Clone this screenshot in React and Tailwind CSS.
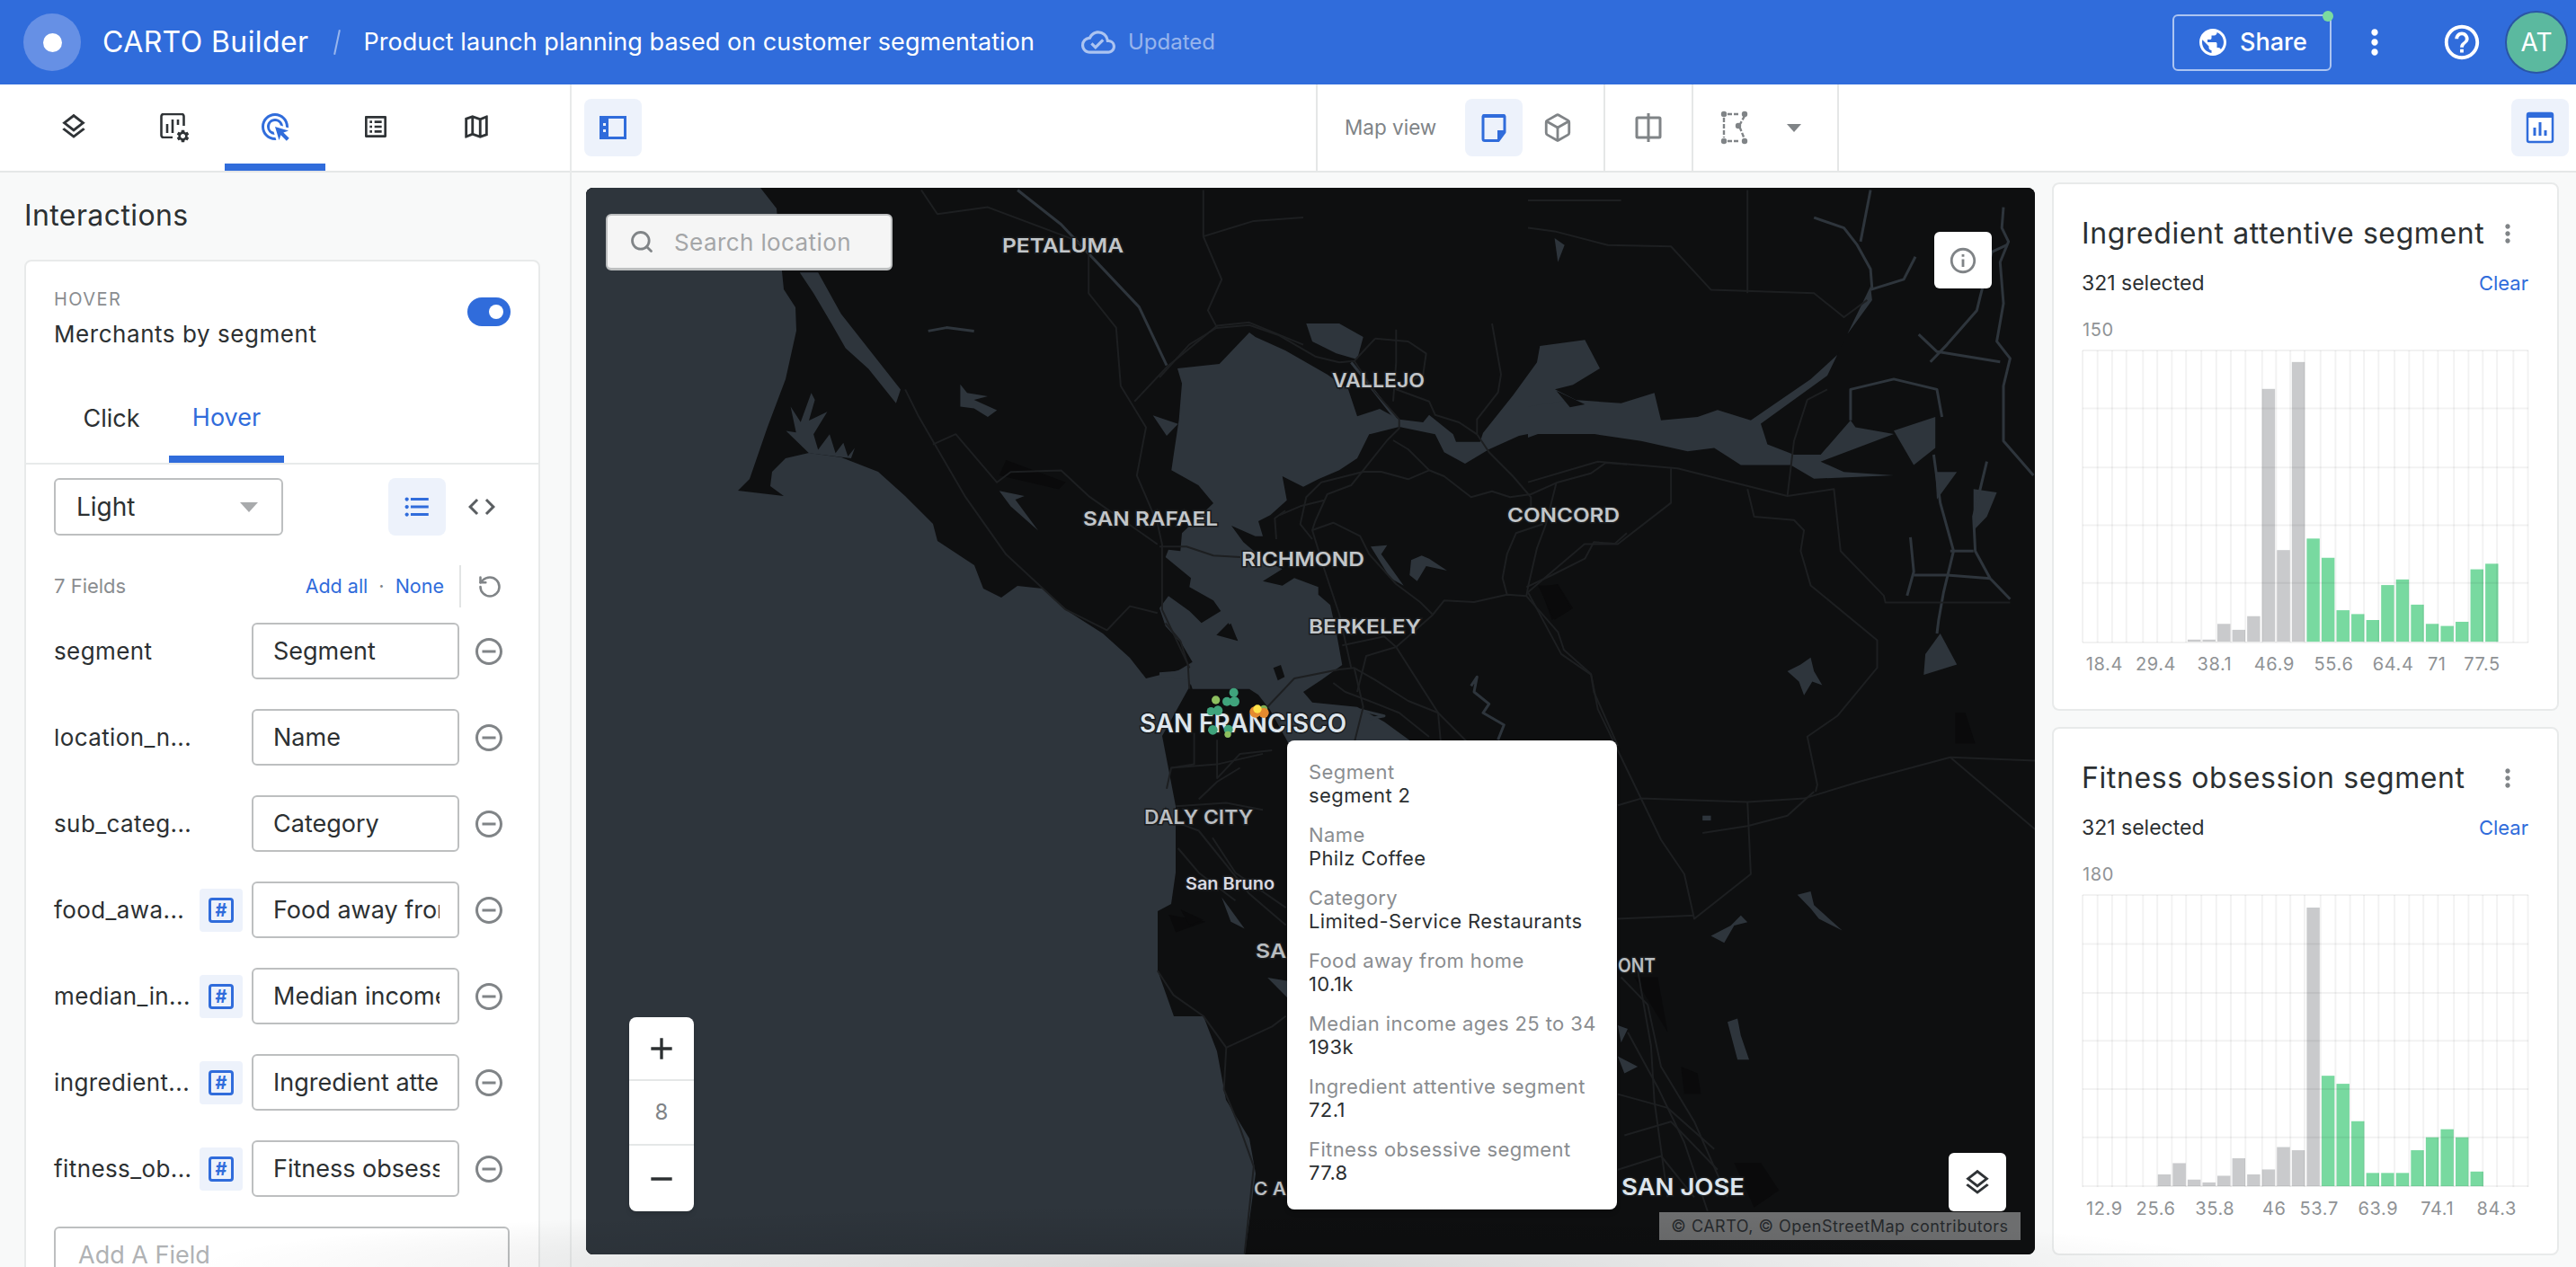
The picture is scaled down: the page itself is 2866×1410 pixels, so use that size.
import React from "react";
import { RotateCcw, Search, Box } from "lucide-react";
import {
  MdOutlineLayers,
  MdAdsClick,
  MdOutlineListAlt,
  MdOutlineMap,
  MdPublic,
  MdMoreVert,
  MdHelpOutline,
  MdOutlineCloudDone,
  MdFormatListBulleted,
  MdCode,
  MdRemoveCircleOutline,
  MdInfoOutline,
  MdAdd,
  MdRemove,
  MdSettings,
} from "react-icons/md";

// map traces: points read off the reference, [x, y, x, y...] in zoom space
const conv = (ox, oy, sx, sy, a, close) => {
  let d = "";
  for (let i = 0; i < a.length; i += 2) {
    d += (i ? "L" : "M") + (ox + a[i] / sx).toFixed(1) + " " + (oy + a[i + 1] / sy).toFixed(1);
  }
  return d + (close ? "Z" : "");
};
const z8 = (a, c) => conv(650, 200, 1.96, 2.613, a, c);
const z9 = (a, c) => conv(650, 800, 1.96, 2.57, a, c);
const z10 = (a, c) => conv(1700, 200, 2.703, 1.307, a, c);
const z11 = (a, c) => conv(1290, 360, 3, 3, a, c);
const pg = (a, c) => conv(0, 0, 1, 1, a, c);

const WATER = "#2e353c";
const ROAD = "#1d1f21";

const waterShapes = [
  pg([652, 209, 846, 209, 864, 232, 869, 292, 872, 322, 885, 342, 886, 368, 874, 422, 854, 475, 834, 533, 821, 546, 872, 552, 857, 541, 859, 525, 874, 510, 900, 504, 936, 509, 977, 525, 1007, 552, 1038, 583, 1043, 602, 1084, 629, 1094, 655, 1114, 665, 1132, 652, 1160, 655, 1191, 682, 1227, 705, 1257, 732, 1275, 755, 1323, 743, 1330, 750, 1323, 765, 1293, 819, 1308, 897, 1308, 971, 1303, 1006, 1288, 1014, 1288, 1080, 1306, 1131, 1339, 1131, 1354, 1170, 1364, 1224, 1390, 1267, 1397, 1306, 1385, 1396, 652, 1396], true),
  z11([0, 1165, 60, 1160, 110, 1130, 75, 1070, 20, 1010, 0, 950, 30, 910, 100, 960, 140, 1000, 205, 960, 180, 925, 100, 880, 105, 850, 20, 780, 30, 755, 70, 760, 75, 700, 180, 600, 130, 540, 40, 490, 50, 420, 65, 320, 75, 200, 60, 150, 200, 135, 300, 30, 320, 45, 420, 90, 560, 170, 630, 220, 660, 310, 735, 285, 800, 320, 880, 330, 900, 305, 980, 370, 990, 395, 1070, 395, 1080, 365, 1180, 240, 1260, 130, 1270, 75, 1420, 55, 1470, 150, 1380, 205, 1320, 220, 1400, 260, 1560, 290, 1560, 375, 1350, 345, 1200, 375, 1100, 420, 1020, 468, 950, 430, 920, 370, 800, 345, 700, 370, 660, 450, 600, 490, 530, 520, 480, 545, 410, 510, 425, 590, 370, 640, 330, 660, 345, 710, 320, 710, 240, 675, 280, 730, 350, 790, 410, 820, 345, 860, 410, 875, 450, 850, 530, 880, 530, 905, 570, 940, 590, 1030, 610, 1140, 540, 1190, 480, 1230, 510, 1265, 660, 1280, 750, 1330, 860, 1410, 860, 1500, 500, 1500, 430, 1400, 369, 1290, 330, 1240, 300, 1220, 110, 1220, 100, 1190, 0, 1180], true),
  z10([0, 330, 130, 320, 280, 325, 380, 310, 400, 350, 510, 345, 570, 335, 670, 350, 850, 290, 930, 255, 1020, 165, 1030, 155, 1035, 175, 960, 225, 900, 285, 700, 355, 720, 385, 800, 400, 880, 400, 970, 350, 985, 360, 1100, 370, 880, 410, 950, 425, 1100, 430, 860, 435, 790, 415, 640, 415, 560, 390, 480, 395, 340, 380, 200, 370, 30, 370, 0, 375], true),
  z10([1100, 365, 1225, 345, 1225, 390, 1160, 415], true),
  z10([1340, 450, 1410, 455, 1380, 490, 1340, 510], true),
  z10([1225, 425, 1290, 425, 1230, 465], true),
  z10([1195, 690, 1240, 660, 1290, 705, 1190, 720], true),
  z10([780, 715, 820, 705, 850, 695, 860, 715, 885, 735, 855, 730, 830, 750, 815, 730], true),
  z10([810, 1040, 850, 1035, 860, 1055, 945, 1092, 875, 1075, 850, 1060], true),
  z10([550, 1100, 610, 1085, 640, 1070, 660, 1080, 620, 1085, 590, 1110], true),
  z10([600, 1225, 630, 1220, 640, 1245, 665, 1280, 630, 1280], true),
  z10([270, 1230, 300, 1235, 280, 1255], true),
  z10([270, 1275, 330, 1290, 290, 1300], true),
  z10([525, 925, 550, 925, 550, 932, 525, 932], true),
  z10([80, 85, 110, 95, 90, 120], true),
  z8([470, 270, 510, 270, 560, 390, 690, 610, 680, 650, 620, 550, 570, 490, 540, 420, 500, 330], true),
  z8([495, 620, 503, 640, 490, 700, 530, 675, 500, 740, 510, 785, 535, 740, 548, 795, 565, 765, 575, 805, 590, 780, 582, 810, 490, 795, 440, 730, 462, 735, 450, 660, 472, 705], true),
  z8([820, 595, 835, 620, 880, 630, 850, 640, 900, 670, 880, 690, 850, 665, 820, 660], true),
  z8([905, 905, 960, 920, 940, 930, 990, 1020, 930, 950], true),
  z8([1240, 685, 1295, 710, 1270, 745], true),
  z11([490, 0, 600, 0, 680, 45, 660, 120, 590, 100, 510, 60], true),
  z11([705, 745, 760, 740, 740, 770, 815, 875, 770, 850], true),
  z11([840, 790, 875, 775, 900, 785, 960, 825, 890, 810, 860, 860, 835, 840], true),
  z9([1390, 510, 1440, 600, 1410, 580], true),
  z9([1490, 740, 1535, 750, 1535, 800], true),
];

const landIslands = [
  z11([230, 1000, 262, 1060, 190, 1040], true),
  z11([380, 1150, 405, 1140, 418, 1180, 395, 1192], true),
  z11([1325, 225, 1420, 270, 1370, 280], true),
  z8([1385, 1320, 1410, 1290, 1425, 1340], true),
];

const rivers = [
  z8([945, 30, 1040, 130, 1210, 370, 1270, 540]),
  z8([750, 440, 790, 430, 850, 440]),
  z11([640, 130, 720, 230, 790, 320]),
  z10([970, 350, 970, 305, 1100, 290, 1230, 305, 1245, 345]),
  z10([860, 55, 950, 70, 990, 95, 1030, 130, 1035, 160]),
  z10([1000, 90, 1030, 15]),
  z10([1030, 160, 1130, 145, 1165, 112]),
  z10([1175, 225, 1230, 250, 1420, 265]),
  z10([1430, 40, 1425, 70, 1445, 90, 1420, 120, 1430, 180, 1410, 235, 1450, 260, 1430, 300, 1430, 380, 1520, 430]),
  z10([1210, 265, 1260, 240, 1350, 190, 1360, 170, 1395, 105, 1440, 95]),
  z10([1220, 400, 1240, 470, 1280, 540, 1250, 600, 1235, 640, 1230, 660]),
  z10([1380, 410, 1340, 490, 1345, 540, 1390, 580, 1450, 610]),
  z10([1150, 520, 1160, 570, 1140, 605]),
  z10([1160, 575, 1260, 575, 1390, 580]),
  z10([1270, 540, 1340, 540]),
  z11([1040, 1210, 1060, 1180, 1050, 1230, 1100, 1270, 1080, 1300, 1150, 1340, 1130, 1390]),
  z11([670, 1290, 750, 1310, 700, 1320]),
];

const roads = [
  z11([0, 180, 100, 70, 190, 15, 300, 5, 400, 40, 520, 110, 600, 130, 650, 125, 720, 50]),
  z11([650, 125, 720, 230, 800, 320, 800, 350, 760, 390, 680, 490, 640, 540, 560, 570, 520, 660, 510, 690, 550, 820, 600, 970, 640, 1150]),
  z11([780, 390, 830, 420, 900, 490, 830, 520, 740, 495, 680, 495, 540, 530, 490, 580, 470, 670, 510, 720]),
  z11([900, 490, 950, 510, 1040, 580, 1110, 560, 1170, 580, 1240, 570, 1330, 530, 1440, 500, 1490, 465, 1560, 470]),
  z11([1060, 370, 1100, 430, 1180, 510, 1240, 580, 1240, 620]),
  z11([1060, 370, 1060, 320, 1130, 230, 1140, 170, 1110, 0]),
  z11([1325, 530, 1290, 670, 1260, 750, 1230, 880, 1225, 910, 1330, 1030, 1350, 1090, 1440, 1170, 1450, 1230, 1530, 1410]),
  z11([1225, 910, 1160, 905, 1050, 930, 950, 925, 910, 975, 790, 1080, 690, 1110, 660, 1230]),
  z11([510, 690, 580, 665, 670, 710, 700, 770, 790, 870, 870, 930, 910, 970]),
  z11([790, 1080, 930, 1300, 940, 1410]),
  z11([0, 745, 90, 745, 180, 775, 270, 780]),
  z11([100, 1220, 95, 1140, 70, 1060, 20, 1000]),
  z11([360, 1280, 450, 1185, 600, 1155, 650, 1150, 720, 1190, 830, 1260, 930, 1300, 1030, 1400]),
  z11([1160, 905, 1145, 850, 1160, 770, 1190, 700, 1280, 670]),
  z11([1225, 880, 1310, 840, 1420, 785, 1450, 730, 1520, 735, 1560, 700]),
  z11([790, 20, 790, 130, 780, 260]),
  z11([720, 50, 830, 60, 890, 100, 880, 170, 790, 220, 900, 260, 920, 305, 1000, 330, 1060, 370]),
  z11([610, 1075, 750, 1045, 790, 1080]),
  z11([400, 640, 470, 610, 550, 590]),
  z11([390, 720, 385, 650, 420, 625]),
  z11([580, 1200, 620, 1230, 700, 1260, 800, 1300, 900, 1380]),
  z11([650, 1150, 680, 1280, 650, 1400]),
  z10([0, 30, 280, 30]),
  z10([0, 70, 80, 75, 240, 95, 430, 97, 550, 160, 860, 165, 950, 200, 1020, 175]),
  z10([660, 15, 660, 165]),
  z10([0, 440, 210, 410, 450, 420, 780, 460, 920, 450, 940, 540, 1070, 605, 1075, 615, 1450, 615]),
  z10([660, 450, 680, 490, 800, 495, 830, 510, 820, 540, 850, 590, 1050, 670, 1050, 710, 930, 780, 840, 810, 870, 880, 865, 890]),
  z10([780, 460, 800, 380, 840, 320, 900, 305]),
  z10([0, 600, 100, 690, 190, 720, 210, 770, 300, 860, 400, 960, 470, 1010, 500, 1075, 670, 1010, 660, 905]),
  z10([430, 420, 430, 470, 270, 530, 170, 530, 0, 600]),
  z10([270, 910, 340, 900, 660, 905, 830, 900, 1000, 875, 1270, 840, 1525, 945]),
  z10([1270, 840, 1525, 845]),
  z10([525, 950, 660, 940, 780, 925, 860, 890]),
  z10([270, 1075, 500, 1070]),
  z10([280, 1160, 360, 1200, 400, 1290, 500, 1370, 600, 1480]),
  z10([330, 1150, 370, 1260, 380, 1340, 420, 1480]),
  z10([270, 1330, 420, 1350, 560, 1410]),
  z10([290, 1390, 430, 1370, 570, 1440]),
  z10([270, 1440, 400, 1420, 500, 1480]),
  z10([300, 1240, 390, 1320, 470, 1400, 540, 1500]),
  z8([735, 30, 770, 100, 880, 80, 1060, 170, 1100, 200, 1100, 330, 1160, 430, 1170, 600, 1225, 720, 1205, 860, 1250, 1000, 1260, 1060, 1260, 1250, 1320, 1420]),
  z8([1350, 30, 1350, 165, 1390, 290, 1360, 380, 1380, 430]),
  z8([1350, 165, 1460, 120, 1568, 110]),
  z8([700, 610, 730, 690, 830, 920, 920, 1090, 1050, 1250, 1140, 1310, 1190, 1240, 1250, 1260]),
  z8([760, 770, 810, 740, 900, 880, 930, 850, 1040, 845, 1100, 920, 1250, 1060]),
  z8([1200, 645, 1270, 545, 1380, 425, 1450, 415, 1568, 480]),
  z9([1330, 40, 1330, 130, 1280, 140, 1270, 200]),
  z9([1280, 140, 1380, 130, 1480, 100]),
  z9([1300, 300, 1340, 320, 1420, 450, 1450, 500, 1530, 590]),
  z9([1370, 340, 1420, 440, 1530, 540]),
  z9([1290, 250, 1400, 240, 1480, 260]),
  z9([1250, 720, 1285, 790, 1350, 850, 1400, 940, 1500, 880, 1530, 850]),
  z9([1400, 940, 1395, 1060, 1430, 1170, 1460, 1280, 1440, 1530]),
  z9([1295, 370, 1340, 440, 1420, 520]),
  z9([1380, 60, 1380, 170, 1430, 100, 1500, 90]),
  z9([1430, 140, 1380, 180, 1340, 230]),
];

const parks = [
  z9([1275, 560, 1355, 580, 1290, 610], true),
  z9([1300, 545, 1350, 575, 1320, 590], true),
  z11([1270, 880, 1330, 870, 1380, 950, 1310, 990], true),
  z10([30, 590, 90, 590, 130, 625, 80, 640], true),
  z10([1285, 775, 1315, 775, 1345, 820, 1285, 820], true),
  z10([320, 1160, 390, 1160, 420, 1240], true),
  z10([460, 1290, 510, 1300, 520, 1330, 470, 1330], true),
  z10([620, 1430, 700, 1430, 755, 1470, 680, 1495], true),
  z8([905, 860, 920, 815, 1050, 880, 1035, 900], true),
];

// labels cut by the tooltip keep only their visible letters
const mapLabels = [
  { t: "PETALUMA", x: 1115, w: 135, y: 273, fs: 22, c: "#c2c6c9" },
  { t: "VALLEJO", x: 1482, w: 103, y: 423, fs: 22, c: "#c2c6c9" },
  { t: "SAN RAFAEL", x: 1205, w: 150, y: 577, fs: 22, c: "#c2c6c9" },
  { t: "RICHMOND", x: 1381, w: 137, y: 622, fs: 22, c: "#c2c6c9" },
  { t: "CONCORD", x: 1677, w: 125, y: 573, fs: 22, c: "#c2c6c9" },
  { t: "BERKELEY", x: 1456, w: 125, y: 697, fs: 22, c: "#c2c6c9" },
  { t: "SAN FRANCISCO", x: 1268, w: 230, y: 805, fs: 28, c: "#dde5ec" },
  { t: "DALY CITY", x: 1273, w: 121, y: 909, fs: 22, c: "#b9bdc0" },
  { t: "San Bruno", x: 1319, w: 99, y: 983, fs: 19, c: "#d8d9e2" },
  { t: "SA", x: 1397, w: 34, y: 1058, fs: 22, c: "#b9bdc0" },
  { t: "C A", x: 1395, w: 36, y: 1323, fs: 20, c: "#b9bdc0" },
  { t: "ONT", x: 1800, w: 42, y: 1074, fs: 22, c: "#b9bdc0" },
  { t: "SAN JOSE", x: 1804, w: 137, y: 1321, fs: 26, c: "#dde5ec" },
];

const markers = [
  [248, 1232, 12, "#3fa37c"],
  [250, 1262, 14, "#3fa37c"],
  [225, 1262, 12, "#3fa37c"],
  [188, 1257, 11, "#8dbf5f"],
  [195, 1292, 13, "#3fa37c"],
  [172, 1295, 11, "#3fa37c"],
  [178, 1357, 13, "#3fa37c"],
  [230, 1355, 12, "#3fa37c"],
  [228, 1372, 8, "#8dbf5f"],
  [348, 1287, 10, "#7fae55"],
  [320, 1297, 16, "#e48a2f"],
  [348, 1300, 14, "#e48a2f"],
  [327, 1287, 11, "#ffe34a"],
];

const MapCanvas = () => (
  <svg viewBox="652 209 1612 1187" className="absolute inset-0 h-full w-full">
    <rect x="652" y="209" width="1612" height="1187" fill="#0e0f10" />
    {parks.map((d, i) => (
      <path key={i} d={d} fill="#0a0a0b" />
    ))}
    {waterShapes.map((d, i) => (
      <path key={i} d={d} fill={WATER} />
    ))}
    {landIslands.map((d, i) => (
      <path key={i} d={d} fill="#0e0f10" />
    ))}
    {rivers.map((d, i) => (
      <path key={i} d={d} fill="none" stroke={WATER} strokeWidth="3" strokeLinejoin="round" />
    ))}
    {roads.map((d, i) => (
      <path key={i} d={d} fill="none" stroke={ROAD} strokeWidth="2" strokeLinejoin="round" />
    ))}
    {mapLabels.map((l) => (
      <text
        key={l.t}
        x={l.x}
        y={l.y + l.fs * 0.36}
        textLength={l.w}
        lengthAdjust="spacingAndGlyphs"
        fontSize={l.fs}
        fontWeight="600"
        fontFamily="Inter, sans-serif"
        fill={l.c}
        stroke="#1a1c1e"
        strokeWidth="3"
        paintOrder="stroke"
      >
        {l.t}
      </text>
    ))}
    {markers.map(([x, y, r, c], i) => (
      <circle key={i} cx={1290 + x / 3} cy={360 + y / 3} r={r / 3 + 1} fill={c} />
    ))}
  </svg>
);

// histogram bars as the top edge in zoom px, null = empty bin
const widget1 = {
  title: "Ingredient attentive segment",
  max: "150",
  base: 1348,
  firstGreen: 15,
  tops: [null, null, null, null, null, null, null, 1342, 1342, 1297, 1314, 1275, 625, 1086, 548, 1053, 1108, 1258, 1269, 1286, 1186, 1170, 1242, 1297, 1303, 1291, 1141, 1125],
  rows: [515, 681, 850, 1015, 1180, 1350],
  labels: [["18.4", 213], ["29.4", 361], ["38.1", 530], ["46.9", 702], ["55.6", 873], ["64.4", 1044], ["71", 1170], ["77.5", 1300]],
};
const widget2 = {
  title: "Fitness obsession segment",
  max: "180",
  base: 1338,
  firstGreen: 16,
  tops: [null, null, null, null, null, 1304, 1272, 1319, 1327, 1308, 1258, 1304, 1290, 1226, 1235, 541, 1022, 1045, 1152, 1300, 1300, 1300, 1235, 1198, 1175, 1198, 1296],
  rows: [505, 645, 785, 922, 1060, 1198, 1338],
  labels: [["12.9", 213], ["25.6", 361], ["35.8", 531], ["46", 702], ["53.7", 831], ["63.9", 1001], ["74.1", 1171], ["84.3", 1342]],
};
const gridCols = [150, 193, 235, 276, 324, 365, 407, 448, 492, 535, 577, 619, 667, 707, 748, 789, 835, 878, 920, 960, 1002, 1048, 1090, 1131, 1173, 1219, 1261, 1302, 1343, 1390, 1432];

const Histogram = ({ data }) => {
  const rowTop = data.rows[0];
  return (
    <svg width="496" height="368" className="block overflow-visible">
      {data.tops.map((top, i) =>
        top === null ? null : (
          <rect
            key={i}
            x={i * 16.56 + 1}
            y={(top - rowTop) / 2.57}
            width="14.4"
            height={(data.base - top) / 2.57}
            fill={i >= data.firstGreen ? "#78d9a0" : "#c9cacc"}
          />
        )
      )}
      {gridCols.map((c) => (
        <line key={c} x1={(c - 150) / 2.587} x2={(c - 150) / 2.587} y1="0" y2="325" stroke="rgba(0,0,0,0.05)" strokeWidth="2" />
      ))}
      {data.rows.map((r) => (
        <line key={r} x1="0" x2="496" y1={(r - rowTop) / 2.57} y2={(r - rowTop) / 2.57} stroke="rgba(0,0,0,0.05)" strokeWidth="2" />
      ))}
      {data.labels.map(([t, x]) => (
        <text key={t} x={(x - 150) / 2.587} y="356" textAnchor="middle" fontSize="20" letterSpacing="0.6" fontFamily="Inter, sans-serif" fill="#8f9295">
          {t}
        </text>
      ))}
    </svg>
  );
};

const Widget = ({ data }) => (
  <div className="h-[588px] w-[564px] rounded-lg border-2 border-[#e8eaea] bg-white pl-[31px] pr-[32px] pt-[33px]">
    <div className="flex h-[44px] items-center justify-between">
      <span className="whitespace-nowrap text-[32px] tracking-[0.6px] text-[#2c3032]">{data.title}</span>
      <MdMoreVert className="mr-[7px] shrink-0 text-[#808487]" size={32} />
    </div>
    <div className="mt-[17px] flex h-[32px] items-center justify-between">
      <span className="text-[23px] text-[#2c3032]">321 selected</span>
      <span className="text-[22px] text-[#306cdb]">Clear</span>
    </div>
    <div className="ml-[1px] mt-[24px] h-[24px] text-[20px] leading-[24px] tracking-[0.6px] text-[#909396]">{data.max}</div>
    <div className="ml-[1px] mt-[11px]">
      <Histogram data={data} />
    </div>
  </div>
);

const PanelIcon = () => (
  <svg width="32" height="32" viewBox="0 0 32 32" fill="none">
    <rect x="2.5" y="4.5" width="27" height="23" stroke="#306cdb" strokeWidth="3" />
    <rect x="2" y="4" width="9" height="24" fill="#306cdb" />
    <rect x="5" y="11" width="3" height="3" fill="#edf2fb" />
    <rect x="5" y="18" width="3" height="3" fill="#edf2fb" />
  </svg>
);

const WidgetGearIcon = () => (
  <span className="relative block h-[30px] w-[32px]">
    <svg width="28" height="28" viewBox="0 0 28 28" fill="none" stroke="#2f3336" strokeWidth="2.6">
      <path d="M14 27H4a2.5 2.5 0 0 1-2.5-2.5v-21A2.5 2.5 0 0 1 4 1h20a2.5 2.5 0 0 1 2.5 2.5V14" />
      <path d="M8 22V12M14 22V7M20 13V7" />
    </svg>
    <MdSettings className="absolute bottom-[-4px] right-[-2px] text-[#2f3336]" size={17} />
  </span>
);

const NoteIcon = () => (
  <svg width="30" height="34" viewBox="0 0 30 34" fill="none">
    <path d="M3 4.5h24V22l-7 9.5H5a2 2 0 0 1-2-2z" stroke="#306cdb" strokeWidth="3" strokeLinejoin="round" />
    <rect x="2" y="2" width="26" height="4" rx="1.5" fill="#306cdb" />
    <path d="M28 20h-9v12z" fill="#306cdb" />
  </svg>
);

const SplitIcon = () => (
  <svg width="32" height="32" viewBox="0 0 32 32" fill="none" stroke="#808487" strokeWidth="3">
    <rect x="3" y="5" width="26" height="22" rx="1" />
    <path d="M16 0v32" />
  </svg>
);

const DrawIcon = () => (
  <svg width="32" height="40" viewBox="0 0 32 40" fill="none" stroke="#808487" strokeWidth="2.4">
    <path d="M8 5h14M4 9v22M27 7l-6 11 6 15M8 35h14" strokeDasharray="5 2" />
    <g fill="#808487" stroke="none">
      <circle cx="4" cy="5" r="3.2" />
      <circle cx="27" cy="5" r="3.2" />
      <circle cx="20" cy="18" r="3.2" />
      <circle cx="4" cy="35" r="3.2" />
      <circle cx="27" cy="35" r="3.2" />
    </g>
  </svg>
);

const ChartIcon = () => (
  <svg width="32" height="36" viewBox="0 0 32 36" fill="none">
    <rect x="2" y="2" width="28" height="32" rx="2" fill="#fff" stroke="#306cdb" strokeWidth="2.5" />
    <rect x="2" y="2" width="28" height="5" fill="#306cdb" />
    <path d="M10 27V18M16 27V12M22 27v-6" stroke="#306cdb" strokeWidth="3" />
  </svg>
);

const fields = [
  { name: "segment", label: "Segment" },
  { name: "location_n...", label: "Name" },
  { name: "sub_categ...", label: "Category" },
  { name: "food_awa...", label: "Food away from home", num: true },
  { name: "median_in...", label: "Median income ages 25 to 34", num: true },
  { name: "ingredient...", label: "Ingredient attentive segment", num: true },
  { name: "fitness_ob...", label: "Fitness obsessive segment", num: true },
];

const FieldRow = ({ field }) => (
  <div className="flex h-[63px] items-center">
    <span className="w-[162px] whitespace-nowrap text-[26px] tracking-[0.4px] text-[#2c3032]">{field.name}</span>
    {field.num ? (
      <span className="flex h-[48px] w-[48px] items-center justify-center rounded bg-[#edf2fb]">
        <span className="flex h-[28px] w-[28px] items-center justify-center rounded-[4px] border-[3px] border-[#306cdb] text-[20px] font-bold leading-none text-[#306cdb]">
          #
        </span>
      </span>
    ) : (
      <span className="w-[48px]" />
    )}
    <div className="ml-[10px] flex h-[63px] w-[231px] items-center rounded-md border-2 border-[#bdbfc0] pl-[22px] pr-[20px]">
      <span className="block overflow-hidden whitespace-nowrap pt-[1px] text-[27px] text-[#2c3032]">{field.label}</span>
    </div>
    <MdRemoveCircleOutline className="ml-[15px] text-[#808487]" size={36} />
  </div>
);

const tooltipRows = [
  ["Segment", "segment 2"],
  ["Name", "Philz Coffee"],
  ["Category", "Limited-Service Restaurants"],
  ["Food away from home", "10.1k"],
  ["Median income ages 25 to 34", "193k"],
  ["Ingredient attentive segment", "72.1"],
  ["Fitness obsessive segment", "77.8"],
];

export default function App() {
  return (
    <div className="relative h-[1410px] w-full overflow-hidden bg-[#f8f9f9] font-['Inter',sans-serif]">
      {/* top bar */}
      <header className="flex h-[94px] items-center bg-[#306cdb] text-white">
        <div className="ml-[26px] flex h-[64px] w-[64px] items-center justify-center rounded-full bg-[#6690e5]">
          <div className="h-[21px] w-[21px] rounded-full bg-white" />
        </div>
        <span className="ml-[24px] text-[32px] tracking-[0.4px]">CARTO Builder</span>
        <span className="ml-[31px] h-[28px] w-[2px] rotate-[12deg] bg-white/50" />
        <span className="ml-[28px] whitespace-nowrap text-[27px] tracking-[0.05px]">Product launch planning based on customer segmentation</span>
        <MdOutlineCloudDone className="ml-[52px] text-white/60" size={38} />
        <span className="ml-[14px] text-[24px] text-white/50">Updated</span>
        <div className="relative ml-auto flex h-[63px] w-[177px] items-center justify-center gap-[12px] rounded-md border-2 border-white/60 text-[27px] font-medium">
          <MdPublic size={36} />
          Share
          <span className="absolute right-[-4px] top-[-6px] h-[12px] w-[12px] rounded-full bg-[#7bdc9f]" />
        </div>
        <MdMoreVert className="ml-[26px]" size={44} />
        <MdHelpOutline className="ml-[52px]" size={46} />
        <div className="ml-[25px] mr-[9px] flex h-[70px] w-[70px] items-center justify-center rounded-full border-2 border-[#2a55a5] bg-[#5bb99f] text-[28px]">AT</div>
      </header>

      <div className="flex h-[1316px]">
        {/* left panel */}
        <aside className="w-[636px] shrink-0 border-r-2 border-[#e8eaea]">
          <nav className="flex h-[98px] items-stretch border-b-2 border-[#e5e7e7] bg-white pl-[26px]">
            <span className="flex w-[112px] items-center justify-center pb-[2px]">
              <MdOutlineLayers className="text-[#2f3336]" size={34} />
            </span>
            <span className="flex w-[112px] items-center justify-center pb-[2px]">
              <WidgetGearIcon />
            </span>
            <span className="flex w-[112px] items-center justify-center border-b-[8px] border-[#306cdb] pt-[6px]">
              <MdAdsClick className="text-[#306cdb]" size={36} />
            </span>
            <span className="flex w-[112px] items-center justify-center pb-[2px]">
              <MdOutlineListAlt className="text-[#2f3336]" size={32} />
            </span>
            <span className="flex w-[112px] items-center justify-center pb-[2px]">
              <MdOutlineMap className="text-[#2f3336]" size={34} />
            </span>
          </nav>
          <div className="pl-[27px]">
            <h2 className="pt-[28px] text-[32px] leading-[40px] tracking-[0.4px] text-[#2c3032]">Interactions</h2>
            <div className="mt-[29px] h-[1200px] w-[574px] rounded-lg border-2 border-[#e8eaea] bg-white">
              <div className="flex h-[130px] justify-between px-[31px] pt-[30px]">
                <div>
                  <div className="h-[24px] text-[20px] leading-[24px] tracking-[1.4px] text-[#8a8d90]">HOVER</div>
                  <div className="mt-[9px] text-[26px] leading-[36px] tracking-[0.55px] text-[#2c3032]">Merchants by segment</div>
                </div>
                <div className="mt-[10px] flex h-[32px] w-[48px] items-center justify-end rounded-full bg-[#306cdb] pr-[8px]">
                  <span className="h-[16px] w-[16px] rounded-full bg-white" />
                </div>
              </div>
              <div className="flex h-[96px] border-b-2 border-[#e8eaea] pl-[31px] text-[27px]">
                <span className="flex w-[128px] items-center justify-center pb-[4px] text-[#2c3032]">Click</span>
                <span className="flex w-[128px] items-center justify-center border-b-[8px] border-[#306cdb] pt-[2px] text-[#306cdb]">Hover</span>
              </div>
              <div className="px-[31px] pt-[15px]">
                <div className="flex h-[64px] items-center">
                  <div className="flex h-[64px] w-[255px] items-center justify-between rounded-md border-2 border-[#bdbfc0] pl-[23px] pr-[26px] text-[28px] text-[#2c3032]">
                    Light
                    <span className="h-0 w-0 border-x-[10px] border-t-[11px] border-x-transparent border-t-[#a8aaac]" />
                  </div>
                  <span className="ml-[117px] flex h-[64px] w-[64px] items-center justify-center rounded-lg bg-[#edf2fb]">
                    <MdFormatListBulleted className="text-[#306cdb]" size={34} />
                  </span>
                  <MdCode className="ml-[22px] text-[#5a5e61]" size={36} />
                </div>
                <div className="mt-[33px] flex h-[47px] items-center text-[22px]">
                  <span className="text-[#8a8d90]">7 Fields</span>
                  <span className="ml-auto text-[21.5px] text-[#306cdb]">Add all</span>
                  <span className="mx-[12px] text-[#808487]">·</span>
                  <span className="text-[21.5px] text-[#306cdb]">None</span>
                  <span className="ml-[17px] h-[47px] w-[2px] bg-[#e2e4e4]" />
                  <RotateCcw className="ml-[18px] mr-[9px] text-[#808487]" size={28} strokeWidth={2.2} />
                </div>
                <div className="mt-[17px] flex flex-col gap-[33px]">
                  {fields.map((f) => (
                    <FieldRow key={f.name} field={f} />
                  ))}
                </div>
                <div className="mt-[33px] flex h-[64px] w-[507px] items-center rounded-md border-2 border-[#bdbfc0] pl-[25px] text-[27px] text-[#b0b2b4]">Add A Field</div>
              </div>
            </div>
          </div>
        </aside>

        <div className="min-w-0 flex-1">
          {/* map toolbar */}
          <div className="flex h-[98px] border-b-2 border-[#e5e7e7] bg-white">
            <span className="ml-[14px] mt-[16px] flex h-[64px] w-[64px] items-center justify-center rounded-lg bg-[#edf2fb]">
              <PanelIcon />
            </span>
            <div className="ml-[750px] flex w-[320px] items-center border-l-2 border-[#e5e7e7] pl-[30px]">
              <span className="text-[22.5px] text-[#808487]">Map view</span>
              <span className="ml-[32px] flex h-[64px] w-[64px] items-center justify-center rounded-lg bg-[#edf2fb]">
                <NoteIcon />
              </span>
              <Box className="ml-[22px] text-[#808487]" size={34} strokeWidth={2} />
            </div>
            <div className="flex w-[98px] items-center justify-center border-l-2 border-[#e5e7e7]">
              <SplitIcon />
            </div>
            <div className="flex w-[164px] items-center border-x-2 border-[#e5e7e7] pl-[30px]">
              <DrawIcon />
              <span className="ml-[42px] h-0 w-0 border-x-[8px] border-t-[9px] border-x-transparent border-t-[#808487]" />
            </div>
            <span className="ml-auto mr-[8px] mt-[16px] flex h-[64px] w-[64px] items-center justify-center rounded-lg bg-[#edf2fb]">
              <ChartIcon />
            </span>
          </div>

          <div className="flex pl-[16px]">
            {/* map */}
            <div className="relative mt-[17px] h-[1187px] w-[1612px] shrink-0 overflow-hidden rounded-lg bg-[#0e0f10]">
              <MapCanvas />
              <div className="absolute left-[22px] top-[29px] flex h-[63px] w-[319px] items-center rounded-md border-2 border-b-[3px] border-[#bdbfc0] bg-[#f5f5f5] pl-[24px]">
                <Search className="text-[#808487]" size={28} strokeWidth={2.4} />
                <span className="ml-[22px] whitespace-nowrap text-[26px] tracking-[0.4px] text-[#a4a6a8]">Search location</span>
              </div>
              <span className="absolute left-[1500px] top-[49px] flex h-[63px] w-[64px] items-center justify-center rounded-md bg-white">
                <MdInfoOutline className="text-[#808487]" size={34} />
              </span>
              <div className="absolute left-[48px] top-[923px] flex h-[216px] w-[72px] flex-col rounded-lg bg-white shadow-md">
                <span className="flex h-[71px] items-center justify-center border-b-2 border-[#e5e7e7]">
                  <MdAdd className="text-[#2c3032]" size={40} />
                </span>
                <span className="flex h-[72px] items-center justify-center border-b-2 border-[#e5e7e7] text-[24px] text-[#808487]">8</span>
                <span className="flex flex-1 items-center justify-center">
                  <MdRemove className="text-[#2c3032]" size={40} />
                </span>
              </div>
              <span className="absolute left-[1516px] top-[1074px] flex h-[65px] w-[64px] items-center justify-center rounded-md bg-white">
                <MdOutlineLayers className="text-[#2f3336]" size={34} />
              </span>
              <div className="absolute left-[1194px] top-[1140px] flex h-[31px] w-[402px] items-center justify-center whitespace-nowrap bg-[#6d6e6f] text-[18px] tracking-[0.5px] text-[#26292c]">
                © CARTO, © OpenStreetMap contributors
              </div>
              {/* hover tooltip */}
              <div className="absolute left-[780px] top-[615px] h-[522px] w-[367px] rounded-lg bg-white pl-[24px] pt-[22px] shadow-md">
                {tooltipRows.map(([k, v]) => (
                  <div key={k} className="mb-[18px] text-[22px] leading-[26px] tracking-[0.4px]">
                    <div className="whitespace-nowrap text-[#8a8d90]">{k}</div>
                    <div className="whitespace-nowrap text-[#2c3032]">{v}</div>
                  </div>
                ))}
              </div>
            </div>

            {/* widgets */}
            <div className="ml-[19px] flex flex-col gap-[18px] pt-[11px]">
              <Widget data={widget1} />
              <Widget data={widget2} />
            </div>
          </div>
        </div>
      </div>

      {/* soft shadow along the bottom edge */}
      <div className="pointer-events-none absolute bottom-0 left-[200px] h-[70px] w-[2300px] bg-[radial-gradient(ellipse_at_50%_100%,rgba(0,0,0,0.14),transparent_70%)]" />
    </div>
  );
}
